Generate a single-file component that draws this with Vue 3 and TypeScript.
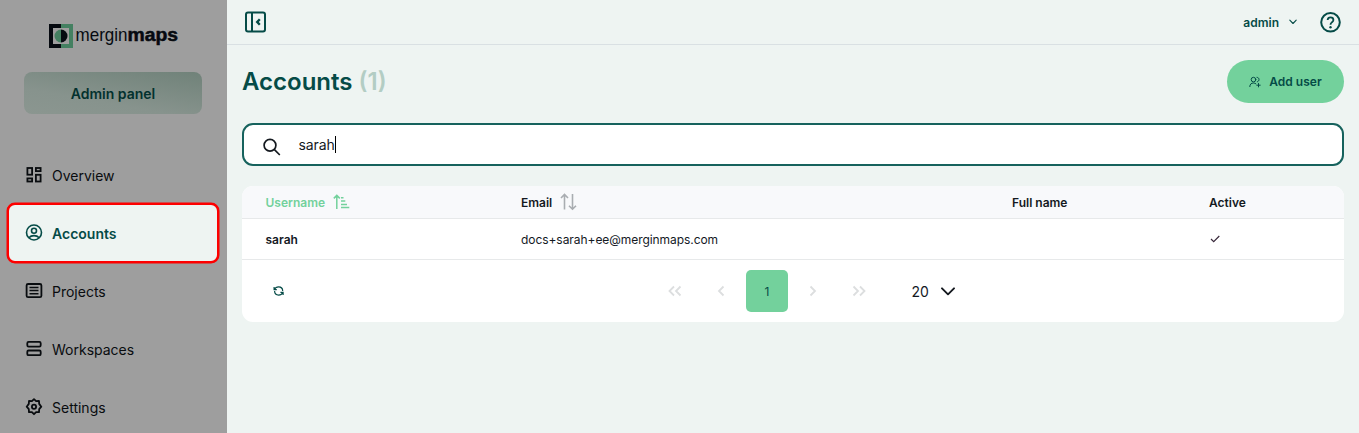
<script setup lang="ts">
import { ref } from 'vue'

interface NavItem {
  id: string
  label: string
}

const navItems: NavItem[] = [
  { id: 'overview', label: 'Overview' },
  { id: 'accounts', label: 'Accounts' },
  { id: 'projects', label: 'Projects' },
  { id: 'workspaces', label: 'Workspaces' },
  { id: 'settings', label: 'Settings' },
]
const active = ref('accounts')

const users = [{ username: 'sarah', email: 'docs+sarah+ee@merginmaps.com', fullName: '' }]
const query = ref('sarah')
</script>

<template>
  <div class="app">
    <aside class="sidebar">
      <svg class="logo" width="130" height="26" viewBox="0 0 130 26">
        <path d="M0 1h12v4H4v16h8v4H0z" fill="#060a10" />
        <path d="M12 1h12v24H12v-4h8V5h-8z" fill="#448061" />
        <path d="M12 6.500a6.500 6.500 0 0 0 0 13z" fill="#448061" />
        <path d="M12 6.500a6.500 6.500 0 0 1 0 13z" fill="#060a10" />
        <text x="26.500" y="17.600" class="logo-light" textLength="52" lengthAdjust="spacingAndGlyphs">mergin</text>
        <text x="78.500" y="17.600" class="logo-bold" textLength="50.500" lengthAdjust="spacingAndGlyphs">maps</text>
      </svg>
      <div class="panel-badge">Admin panel</div>
      <nav class="nav">
        <a
          v-for="item in navItems"
          :key="item.id"
          class="nav-item"
          :class="{ active: item.id === active }"
          @click="active = item.id"
        >
          <svg class="nav-icon" width="18" height="18" viewBox="0 0 18 18" fill="none" stroke="currentColor" stroke-width="1.800">
            <g v-if="item.id === 'overview'">
              <rect x="2.400" y="2" width="4.700" height="6.700" />
              <rect x="10.900" y="2" width="4.700" height="3.100" />
              <rect x="2.400" y="12.400" width="4.700" height="3.100" />
              <rect x="10.900" y="8.800" width="4.700" height="6.700" />
            </g>
            <g v-else-if="item.id === 'accounts'" stroke-width="1.600">
              <circle cx="9" cy="8.500" r="7.500" />
              <circle cx="9" cy="6.800" r="2.500" />
              <path d="M3.900 13.800c1.300-1.500 3-2.200 5.100-2.200s3.800.7 5.100 2.200" />
            </g>
            <g v-else-if="item.id === 'projects'">
              <rect x="1.600" y="2" width="14.800" height="13.200" rx="1.500" />
              <path d="M4.500 5.500h9M4.500 8.600h9M4.500 11.700h9" stroke-width="1.500" />
            </g>
            <g v-else-if="item.id === 'workspaces'">
              <rect x="2.300" y="1.900" width="13.400" height="4.700" rx="1.300" />
              <rect x="2.300" y="10.500" width="13.400" height="4.700" rx="1.300" />
            </g>
            <g v-else stroke-linejoin="round">
              <path d="M9 1.200l2.100 1.900 2.900-.1.200 2.900L16.300 8.700l-2.100 2.500-.2 3-2.900-.1L9 16.200l-2.100-2.100-2.900.1-.2-3L1.700 8.700l2.100-2.800L4 3l2.900.1z" />
              <circle cx="9" cy="8.700" r="2.100" />
            </g>
          </svg>
          <span>{{ item.label }}</span>
        </a>
      </nav>
    </aside>

    <div class="main">
      <header class="topbar">
        <svg width="22" height="22" viewBox="0 0 22 22" fill="none" stroke="#054b47" stroke-width="2">
          <rect x="1" y="1.500" width="19" height="19" rx="2" />
          <path d="M7 1.500v19" />
          <path d="M14.800 8.200L12.200 11l2.600 2.800" stroke-width="2.400" />
        </svg>
        <div class="account">
          <span class="account-name">admin</span>
          <svg width="8" height="6" viewBox="0 0 8 6" fill="none" stroke="#054b47" stroke-width="1.100" stroke-linecap="round" stroke-linejoin="round">
            <path d="M.8 1.200L4 4.500l3.200-3.300" />
          </svg>
          <svg class="help" width="22" height="22" viewBox="0 0 22 22" fill="none" stroke="#054b47" stroke-width="2">
            <circle cx="11.500" cy="11.300" r="9.300" />
            <path d="M8.600 9c.2-1.700 1.300-2.600 2.900-2.600s2.900 1 2.900 2.500c0 1.200-.8 1.800-1.600 2.500-.9.700-1.300 1.200-1.300 2.300" stroke-width="1.800" />
            <circle cx="11.500" cy="16.200" r="1.200" fill="#054b47" stroke="none" />
          </svg>
        </div>
      </header>

      <main class="content">
        <div class="title-row">
          <h1>Accounts <span class="count">({{ users.length }})</span></h1>
          <button class="add">
            <svg width="12" height="12" viewBox="0 0 12 12" fill="none" stroke="currentColor" stroke-width="1" stroke-linecap="round">
              <circle cx="4.500" cy="3.600" r="2.300" />
              <path d="M.8 10.600c0-2.400 1.500-3.600 3.700-3.600 1 0 1.800.3 2.400.8M8 1.300c1.200.1 2 1 2 2.200s-.7 2-1.700 2.300M9.500 7.500v3.400M7.800 9.200h3.400" />
            </svg>
            Add user
          </button>
        </div>

        <div class="search">
          <svg width="18" height="18" viewBox="0 0 18 18" fill="none" stroke="#14191f" stroke-width="1.700">
            <circle cx="7" cy="7.200" r="5.900" />
            <path d="M11.200 11.400l5.600 5.600" />
          </svg>
          <span class="query">{{ query }}</span><span class="caret"></span>
        </div>

        <section class="card">
          <div class="row head">
            <div class="sorted">
              Username
              <svg width="17" height="16" viewBox="0 0 17 16" fill="none" stroke="currentColor" stroke-width="1.500">
                <path d="M3.800 15V1.500M.8 4.400l3-3 3 3M8 3.700h2.500M8 7.100h4.300M8 10.400h6M8 13.500h8.300" />
              </svg>
            </div>
            <div>
              Email
              <svg class="sort" width="17" height="18" viewBox="0 0 17 18" fill="none" stroke="#a9adb1" stroke-width="1.600">
                <path d="M4.500 16.500V1.700M1 5l3.500-3.500L8 5M12.500 1v15M9 12.700l3.500 3.500 3.500-3.500" />
              </svg>
            </div>
            <div>Full name</div>
            <div>Active</div>
          </div>
          <div v-for="user in users" :key="user.username" class="row body">
            <div class="name">{{ user.username }}</div>
            <div class="email">{{ user.email }}</div>
            <div>{{ user.fullName }}</div>
            <div>
              <svg class="check" width="12" height="10" viewBox="0 0 12 10" fill="none" stroke="#3a2a3c" stroke-width="1.200">
                <path d="M2 5l2.700 2.600L10.300 2" />
              </svg>
            </div>
          </div>
          <footer class="pager">
            <svg class="refresh" width="12" height="12" viewBox="0 0 12 12" fill="none" stroke="#054b47" stroke-width="1.200">
              <path d="M1.100 2v2.700H3.800M1.400 4.500C2.300 2.700 3.800 1.900 5.600 1.900c2.300 0 4.100 1.600 4.100 4M10.100 10V7.300H7.400M9.800 7.500C8.900 9.300 7.500 10.100 5.700 10.100c-2.300 0-4.100-1.600-4.100-4" />
            </svg>
            <div class="pages">
              <span class="page"><svg width="14" height="12" viewBox="0 0 14 12"><path d="M6 1.500L1.500 6 6 10.500M12.500 1.500L8 6l4.500 4.500" /></svg></span>
              <span class="page"><svg width="14" height="12" viewBox="0 0 14 12"><path d="M9.500 1.500L5 6l4.500 4.500" /></svg></span>
              <span class="page current">1</span>
              <span class="page"><svg width="14" height="12" viewBox="0 0 14 12"><path d="M4.500 1.500L9 6l-4.500 4.500" /></svg></span>
              <span class="page"><svg width="14" height="12" viewBox="0 0 14 12"><path d="M1.500 1.500L6 6l-4.500 4.500M8 1.500L12.500 6 8 10.500" /></svg></span>
            </div>
            <div class="size">
              20
              <svg width="14" height="9" viewBox="0 0 14 9" fill="none" stroke="#14191f" stroke-width="1.900" stroke-linecap="round" stroke-linejoin="round">
                <path d="M1 1.300l6 6 6-6" />
              </svg>
            </div>
          </footer>
        </section>
      </main>
    </div>
  </div>
</template>

<style>
body {
  background: #eef4f2;
}
</style>

<style scoped>
.app {
  display: flex;
  height: 433px;
  overflow: hidden;
  font-family: Inter, "Liberation Sans", sans-serif;
  font-size: 12px;
  color: #14191f;
}
.app * {
  box-sizing: border-box;
}
svg {
  display: block;
  flex: none;
}
.sidebar {
  width: 227px;
  flex: none;
  background: #9e9e9e;
  padding-top: 23px;
}
.logo {
  margin-left: 49px;
}
.logo text {
  font-family: "Liberation Sans", Arial, sans-serif;
  font-size: 18.5px;
  fill: #060a10;
}
.logo .logo-bold {
  font-weight: 700;
  stroke: #060a10;
  stroke-width: 0.5px;
}
.panel-badge {
  margin: 23px 25px 0 24px;
  height: 42px;
  border-radius: 8px;
  background: linear-gradient(10deg, #8b9690 0%, #87938d 35%, #708279 100%);
  color: #03312e;
  font-size: 14px;
  font-weight: 600;
  line-height: 43px;
  text-align: center;
}
.nav {
  margin: 32px 8px 0 7px;
}
.nav-item {
  display: flex;
  align-items: center;
  gap: 9px;
  height: 58px;
  padding-left: 18px;
  font-size: 14px;
  color: #090c0f;
}
.nav-item.active {
  height: 60px;
  margin: -1px 0;
  padding-left: 16px;
  border: 2px solid #fd0000;
  border-radius: 8px;
  background: #eef4f2;
  box-shadow: 0 0 0 0.5px #fd0000;
  color: #054b47;
  font-weight: 600;
}
.main {
  flex: 1;
  min-width: 0;
}
.topbar {
  display: flex;
  align-items: center;
  justify-content: space-between;
  height: 45px;
  padding: 0 18px 0 18px;
  border-bottom: 1px solid #d9e0e3;
}
.account {
  display: flex;
  align-items: center;
  color: #054b47;
}
.account-name {
  font-weight: 600;
  margin-right: 10px;
}
.help {
  margin-left: 22px;
}
.content {
  padding: 15px 15px 0;
}
.title-row {
  display: flex;
  justify-content: space-between;
  align-items: center;
  height: 43px;
}
h1 {
  margin: 0;
  font-size: 24px;
  line-height: 43px;
  font-weight: 600;
  color: #054b47;
}
.count {
  color: #b3cdc4;
}
.add {
  display: flex;
  align-items: center;
  justify-content: center;
  gap: 8px;
  width: 117px;
  height: 43px;
  border: 0;
  border-radius: 22px;
  background: #73d19c;
  color: #054b47;
  font: inherit;
  font-weight: 600;
}
.search {
  display: flex;
  align-items: center;
  height: 43px;
  margin-top: 20px;
  padding-left: 19px;
  border: 2px solid #16625d;
  border-radius: 11px;
  background: #fff;
  font-size: 14px;
}
.search svg {
  margin-top: 4px;
}
.query {
  margin-left: 17.5px;
  letter-spacing: -0.1px;
}
.caret {
  width: 1px;
  height: 17px;
  background: #000;
}
.card {
  height: 136px;
  margin-top: 20px;
  border-radius: 11px;
  overflow: hidden;
  background: #fff;
}
.row {
  display: grid;
  grid-template-columns: 255.5px 491px 197px 1fr;
  align-items: center;
  padding-left: 23.5px;
  border-bottom: 1px solid #e7e9ea;
}
.row > div {
  display: flex;
  align-items: center;
}
.head {
  height: 33px;
  background: #f8f9fb;
  font-weight: 600;
}
.head svg {
  margin-left: 8px;
}
.head .sorted {
  color: #73d19c;
}
.body {
  height: 41px;
}
.name {
  font-weight: 600;
}
.email {
  letter-spacing: -0.06px;
}
.pager {
  display: flex;
  align-items: center;
  height: 62px;
  padding-left: 31px;
}
.pages {
  display: flex;
  gap: 4px;
  margin-left: 369px;
}
.page {
  display: flex;
  align-items: center;
  justify-content: center;
  width: 42px;
  height: 42px;
  border-radius: 5px;
  color: #054b47;
}
.page svg {
  fill: none;
  stroke: #dcdedf;
  stroke-width: 1.8;
}
.current {
  background: #73d19c;
}
.size {
  display: flex;
  align-items: center;
  gap: 12px;
  margin-left: 31.5px;
  font-size: 14px;
}
</style>
